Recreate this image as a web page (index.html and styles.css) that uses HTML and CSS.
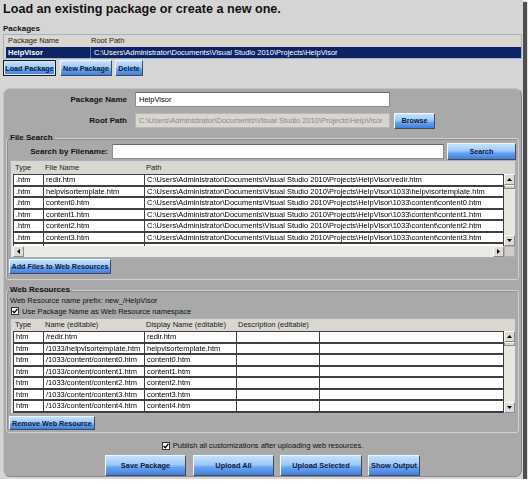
FILE: index.html
```html
<!DOCTYPE html>
<html>
<head>
<meta charset="utf-8">
<link rel="stylesheet" href="styles.css">
</head>
<body>
<div class="app">
  <h1 class="title">Load an existing package or create a new one.</h1>
  <div class="sec-label">Packages</div>
  <div class="pkg-list">
    <div class="pkg-head"><span class="pc1">Package Name</span><span>Root Path</span></div>
    <div class="pkg-row"><span class="pc1">HelpVisor</span><span class="pc2">C:\Users\Administrator\Documents\Visual Studio 2010\Projects\HelpVisor</span></div>
  </div>
  <div class="btn-row">
    <button class="btn focus w-load">Load Package</button>
    <button class="btn w-new">New Package</button>
    <button class="btn w-del">Delete</button>
  </div>

  <div class="panel">
    <div class="frow">
      <label class="flabel">Package Name</label>
      <div class="tinput">HelpVisor</div>
    </div>
    <div class="frow">
      <label class="flabel">Root Path</label>
      <div class="tinput disabled">C:\Users\Administrator\Documents\Visual Studio 2010\Projects\HelpVisor</div>
      <button class="btn w-browse">Browse</button>
    </div>

    <fieldset class="group g-files">
      <legend>File Search</legend>
      <div class="srow">
        <label class="slabel">Search by Filename:</label>
        <div class="tinput sinput"></div>
        <button class="btn w-search">Search</button>
      </div>
      <div class="grid files">
        <div class="ghead">
          <span class="h c-type">Type</span><span class="h c-fname">File Name</span><span class="h">Path</span>
        </div>
        <div class="gbody">
          <div class="rows">
            <div class="row"><span class="cell c-type">.htm</span><span class="cell c-fname">redir.htm</span><span class="cell c-path">C:\Users\Administrator\Documents\Visual Studio 2010\Projects\HelpVisor\redir.htm</span></div>
            <div class="row"><span class="cell c-type">.htm</span><span class="cell c-fname">helpvisortemplate.htm</span><span class="cell c-path">C:\Users\Administrator\Documents\Visual Studio 2010\Projects\HelpVisor\1033\helpvisortemplate.htm</span></div>
            <div class="row"><span class="cell c-type">.htm</span><span class="cell c-fname">content0.htm</span><span class="cell c-path">C:\Users\Administrator\Documents\Visual Studio 2010\Projects\HelpVisor\1033\content\content0.htm</span></div>
            <div class="row"><span class="cell c-type">.htm</span><span class="cell c-fname">content1.htm</span><span class="cell c-path">C:\Users\Administrator\Documents\Visual Studio 2010\Projects\HelpVisor\1033\content\content1.htm</span></div>
            <div class="row"><span class="cell c-type">.htm</span><span class="cell c-fname">content2.htm</span><span class="cell c-path">C:\Users\Administrator\Documents\Visual Studio 2010\Projects\HelpVisor\1033\content\content2.htm</span></div>
            <div class="row"><span class="cell c-type">.htm</span><span class="cell c-fname">content3.htm</span><span class="cell c-path">C:\Users\Administrator\Documents\Visual Studio 2010\Projects\HelpVisor\1033\content\content3.htm</span></div>
            <div class="row"><span class="cell c-type">.htm</span><span class="cell c-fname">content4.htm</span><span class="cell c-path">C:\Users\Administrator\Documents\Visual Studio 2010\Projects\HelpVisor\1033\content\content4.htm</span></div>
          </div>
          <div class="vscroll">
            <div class="sbtn"><svg width="5" height="3" viewBox="0 0 5 3"><polygon points="0,3 5,3 2.5,0" fill="#000"/></svg></div>
            <div class="thumb"></div>
            <div class="strack"></div>
            <div class="sbtn"><svg width="5" height="3" viewBox="0 0 5 3"><polygon points="0,0 5,0 2.5,3" fill="#000"/></svg></div>
          </div>
        </div>
        <div class="hscroll">
          <div class="sbtn"><svg width="3" height="5" viewBox="0 0 3 5"><polygon points="3,0 3,5 0,2.5" fill="#000"/></svg></div>
          <div class="htrack"></div>
          <div class="sbtn"><svg width="3" height="5" viewBox="0 0 3 5"><polygon points="0,0 0,5 3,2.5" fill="#000"/></svg></div>
          <div class="corner"></div>
        </div>
      </div>
      <button class="btn w-add">Add Files to Web Resources</button>
    </fieldset>

    <fieldset class="group g-web">
      <legend>Web Resources</legend>
      <div class="prefix">Web Resource name prefix: new_/HelpVisor</div>
      <div class="chk-row">
        <span class="chk"><svg width="6" height="6" viewBox="0 0 6 6"><path d="M0.6 3 L2.3 4.8 L5.4 0.9" fill="none" stroke="#000" stroke-width="1.4"/></svg></span>
        <span>Use Package Name as Web Resource namespace</span>
      </div>
      <div class="grid web">
        <div class="ghead">
          <span class="h w-type">Type</span><span class="h w-name">Name (editable)</span><span class="h w-disp">Display Name (editable)</span><span class="h w-desc">Description (editable)</span>
        </div>
        <div class="gbody">
          <div class="rows">
            <div class="row"><span class="cell w-type">htm</span><span class="cell w-name">/redir.htm</span><span class="cell w-disp">redir.htm</span><span class="cell w-desc"></span><span class="cell w-last"></span></div>
            <div class="row"><span class="cell w-type">htm</span><span class="cell w-name">/1033/helpvisortemplate.htm</span><span class="cell w-disp">helpvisortemplate.htm</span><span class="cell w-desc"></span><span class="cell w-last"></span></div>
            <div class="row"><span class="cell w-type">htm</span><span class="cell w-name">/1033/content/content0.htm</span><span class="cell w-disp">content0.htm</span><span class="cell w-desc"></span><span class="cell w-last"></span></div>
            <div class="row"><span class="cell w-type">htm</span><span class="cell w-name">/1033/content/content1.htm</span><span class="cell w-disp">content1.htm</span><span class="cell w-desc"></span><span class="cell w-last"></span></div>
            <div class="row"><span class="cell w-type">htm</span><span class="cell w-name">/1033/content/content2.htm</span><span class="cell w-disp">content2.htm</span><span class="cell w-desc"></span><span class="cell w-last"></span></div>
            <div class="row"><span class="cell w-type">htm</span><span class="cell w-name">/1033/content/content3.htm</span><span class="cell w-disp">content3.htm</span><span class="cell w-desc"></span><span class="cell w-last"></span></div>
            <div class="row"><span class="cell w-type">htm</span><span class="cell w-name">/1033/content/content4.htm</span><span class="cell w-disp">content4.htm</span><span class="cell w-desc"></span><span class="cell w-last"></span></div>
            <div class="row"><span class="cell w-type">htm</span><span class="cell w-name">/1033/content/content5.htm</span><span class="cell w-disp">content5.htm</span><span class="cell w-desc"></span><span class="cell w-last"></span></div>
          </div>
          <div class="vscroll">
            <div class="sbtn"><svg width="5" height="3" viewBox="0 0 5 3"><polygon points="0,3 5,3 2.5,0" fill="#000"/></svg></div>
            <div class="thumb"></div>
            <div class="strack"></div>
            <div class="sbtn"><svg width="5" height="3" viewBox="0 0 5 3"><polygon points="0,0 5,0 2.5,3" fill="#000"/></svg></div>
          </div>
        </div>
      </div>
      <button class="btn w-remove">Remove Web Resource</button>
    </fieldset>

    <div class="publish">
      <span class="chk"><svg width="6" height="6" viewBox="0 0 6 6"><path d="M0.6 3 L2.3 4.8 L5.4 0.9" fill="none" stroke="#000" stroke-width="1.4"/></svg></span>
      <span>Publish all customizations after uploading web resources.</span>
    </div>
    <div class="actions">
      <button class="btn big w-save">Save Package</button>
      <button class="btn big w-upall">Upload All</button>
      <button class="btn big w-upsel">Upload Selected</button>
      <button class="btn big w-show">Show Output</button>
    </div>
  </div>
</div>
</body>
</html>
```

FILE: styles.css
```css
* { box-sizing: border-box; }

body {
  margin: 0;
  background: #ffffff;
  font-family: "Liberation Sans", Arial, sans-serif;
  font-size: 7.5px;
  color: #111;
}

.app {
  width: 523px;
  height: 479px;
  background: #d5d5d5;
  box-shadow: 4px 2px 1px #4e4e4e;
  padding-left: 3px;
  display: flex;
  flex-direction: column;
}

.title {
  margin: 0;
  height: 24px;
  padding-top: 1px;
  font-size: 12.6px;
  line-height: 16px;
  font-weight: bold;
  color: #111;
}

.sec-label {
  height: 10px;
  line-height: 10px;
  font-weight: bold;
  font-size: 8px;
}

.pkg-list {
  width: 519px;
  height: 25px;
  border: 1px solid #a2b4c6;
  background: #d5d5d5;
}

.pkg-head {
  height: 11px;
  line-height: 11px;
  background: #dbd7cf;
  display: flex;
  color: #222;
}

.pkg-row {
  margin: 1px 0 0 2px;
  height: 11px;
  line-height: 11px;
  background: #0c2466;
  color: #fff;
  display: flex;
}

.pc1 { width: 87px; padding-left: 4px; }
.pkg-row .pc1 { width: 85px; padding-left: 2px; font-weight: bold; border-right: 1px solid #5a6f9a; }
.pc2 { padding-left: 3px; }

.btn-row {
  margin-top: 1px;
  display: flex;
  gap: 4px;
  height: 16px;
}

.btn {
  font-family: "Liberation Sans", Arial, sans-serif;
  font-weight: bold;
  font-size: 7.2px;
  color: #10183a;
  background: linear-gradient(#c6e2fc, #9ccaf7 45%, #6aa4ee 60%, #3f7fe2);
  border: 1px solid #4a4a4a;
  border-top-color: #eef6ff;
  border-left-color: #eef6ff;
  padding: 0;
  height: 16px;
  white-space: nowrap;
}

.btn.focus { border: 1px solid #1a1a1a; box-shadow: inset 0 0 0 1px #cfe6ff; }

.w-load { width: 53px; }
.w-new { width: 52px; }
.w-del { width: 28px; margin-left: -1px; }

.panel {
  margin-top: 12px;
  width: 519px;
  height: 389px;
  background: #a9a9a9;
  border: 1px solid #c2c2c2;
  border-right-color: #8a8a8a;
  border-bottom-color: #8a8a8a;
  border-radius: 7px;
  padding-top: 3px;
  display: flex;
  flex-direction: column;
}

.frow {
  display: flex;
  align-items: center;
  height: 15px;
}
.frow + .frow { margin-top: 6px; }

.flabel {
  width: 123px;
  margin-right: 8px;
  text-align: right;
  font-weight: bold;
  font-size: 8px;
}

.tinput {
  width: 255px;
  height: 15px;
  line-height: 13px;
  border: 1px solid #8c8c8c;
  border-top-color: #6a6a6a;
  background: #fff;
  padding-left: 3px;
  white-space: nowrap;
  overflow: hidden;
  color: #000;
}
.tinput.disabled {
  background: #d9d6cf;
  color: #8a8a8a;
  border-color: #b8b8b8;
}

.w-browse { width: 41px; margin-left: 4px; }

.group {
  margin: 5px 0 0 2px;
  width: 513px;
  padding: 0;
  border: 1px solid #d2d2d2;
  border-radius: 3px;
  box-shadow: inset 1px 1px 0 #8e8e8e;
}
.group legend {
  font-weight: bold;
  font-size: 8px;
  line-height: 10px;
  padding: 0 2px;
  margin-left: 1px;
}

.srow {
  display: flex;
  align-items: center;
  height: 16px;
}
.slabel {
  width: 101px;
  text-align: right;
  font-weight: bold;
  font-size: 8px;
}
.sinput { width: 332px; margin-left: 4px; }
.w-search { width: 69px; margin-left: 3px; height: 17px; }

.grid {
  margin-left: 3px;
  width: 506px;
  border: 1px solid #9fb2c4;
  background: #e6e4df;
  display: flex;
  flex-direction: column;
}
.files { margin-top: 1px; height: 98px; }
.web { margin-top: 2px; height: 96px; }

.ghead {
  display: flex;
  padding-left: 2px;
  background: #dad7d0;
  color: #222;
}
.files .ghead { height: 13px; line-height: 14px; }
.web .ghead { height: 12px; line-height: 12px; }
.ghead .h { padding-left: 2px; flex: none; }

.gbody {
  display: flex;
  padding-left: 2px;
}
.files .gbody { height: 72px; }
.web .gbody { height: 82px; }

.rows {
  flex: 1;
  overflow: hidden;
  filter: grayscale(100%);
}

.row {
  display: flex;
  height: 11px;
  border-top: 1px solid #3f3f3f;
  border-bottom: 1px solid #3f3f3f;
  background: #fff;
}
.row:nth-child(odd) { height: 12px; }

.cell {
  flex: none;
  height: 100%;
  line-height: 9px;
  padding-left: 2px;
  border-left: 1px solid #3f3f3f;
  white-space: nowrap;
  overflow: hidden;
  color: #000;
}

.c-type { width: 30px; }
.c-fname { width: 101px; }
.c-path { flex: 1; border-right: 1px solid #3f3f3f; }

.w-type { width: 30px; }
.w-name { width: 101px; }
.w-disp { width: 92px; }
.w-desc { width: 83px; }
.w-last { flex: 1; border-right: 1px solid #3f3f3f; }

.vscroll {
  width: 11px;
  display: flex;
  flex-direction: column;
  background: #e8e6e1;
}
.sbtn {
  width: 11px;
  height: 11px;
  flex: none;
  background: #dedbd4;
  border: 1px solid #8a8a8a;
  border-top-color: #fafafa;
  border-left-color: #fafafa;
  display: flex;
  align-items: center;
  justify-content: center;
}
.thumb {
  height: 4px;
  flex: none;
  background: #d8d5ce;
  border: 1px solid #8a8a8a;
  border-top-color: #fafafa;
}
.strack { flex: 1; }

.hscroll {
  height: 11px;
  display: flex;
  padding-left: 2px;
  background: #e8e6e1;
}
.htrack { flex: 1; background: #ebeae6; }
.corner {
  width: 11px;
  background: #d0cdc6;
  border: 1px solid #b0b0b0;
}

.w-add { width: 102px; height: 15px; margin: 1px 0 5px 2px; }

.prefix {
  height: 11px;
  line-height: 11px;
  padding-left: 3px;
}
.chk-row {
  display: flex;
  align-items: center;
  height: 10px;
  padding-left: 4px;
  gap: 3px;
}
.chk {
  width: 8px;
  height: 8px;
  background: #fff;
  border: 1px solid #333;
  display: flex;
  align-items: center;
  justify-content: center;
  flex: none;
}

.w-remove { width: 86px; height: 14px; margin: 2px 0 2px 2px; }

.publish {
  margin-top: 8px;
  height: 10px;
  display: flex;
  align-items: center;
  justify-content: center;
  gap: 3px;
}

.actions {
  margin-top: 5px;
  display: flex;
  justify-content: center;
  gap: 6px;
}
.btn.big { height: 21px; font-size: 7.4px; }
.w-save { width: 81px; }
.w-upall { width: 81px; margin-left: 1px; }
.w-upsel { width: 82px; }
.w-show { width: 52px; }
```
